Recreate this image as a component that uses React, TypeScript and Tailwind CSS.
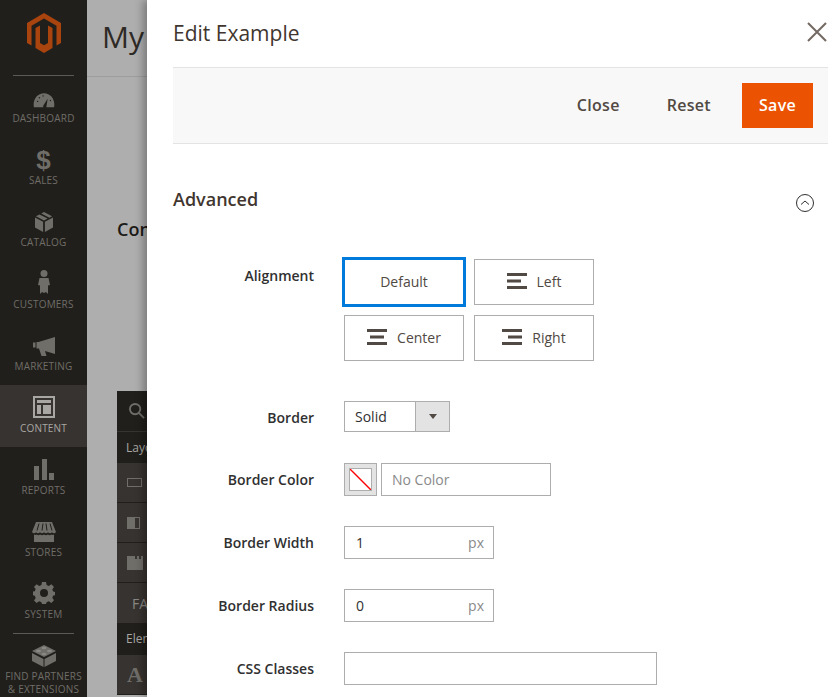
import React from "react";

const icons: Record<string, React.ReactNode> = {
  dashboard: (
    <svg width="22" height="16" viewBox="0 0 24 17">
      <path d="M1 16.500C-.5 8 4.500 1 12 1s12.500 7 11 15.500H14.500L16 7l-4 6.500c-1 1-1 2-.8 3H1z" fill="#706e69" />
      <circle cx="5" cy="10" r=".8" fill="#211f1b" />
      <circle cx="7" cy="6" r=".8" fill="#211f1b" />
      <circle cx="11" cy="4" r=".8" fill="#211f1b" />
      <circle cx="19" cy="9" r=".8" fill="#211f1b" />
    </svg>
  ),
  sales: <span className="font-['Liberation_Sans'] font-bold text-[26px] leading-[24px] mb-[-2px] text-[#706e69]">$</span>,
  catalog: (
    <svg width="18" height="20" viewBox="0 0 20 22">
      <path d="M10 0l9 4.500-3 1.700-9-4.600zM5 2.600l9 4.600L10 9.300 1 4.500z" fill="#706e69" />
      <path d="M0 6l9 4.800V22l-9-4.800zM20 6v11.200L11 22V10.800z" fill="#706e69" />
    </svg>
  ),
  customers: (
    <svg width="12" height="24" viewBox="0 0 12 24">
      <circle cx="6" cy="3.500" r="3.500" fill="#706e69" />
      <path d="M1.500 8h9L12 15l-2 .5V24l-2-2-2 1-2-1-2 2v-8.500L0 15z" fill="#706e69" />
    </svg>
  ),
  marketing: (
    <svg width="22" height="19" viewBox="0 0 22 19">
      <path d="M0 5.500h2.500v5H0zM3.500 5h2L22 0v17l-10-3 1.500 5H8.500L6 11.500H3.500z" fill="#706e69" />
    </svg>
  ),
  content: (
    <svg width="22" height="22" viewBox="0 0 22 22">
      <path fillRule="evenodd" d="M0 0h22v22H0zM2 2v18h18V2z" fill="#a9a7a3" />
      <path d="M4 4h14v3H4zM4 9h4v9H4zM10 9h8v9h-8z" fill="#a9a7a3" />
    </svg>
  ),
  reports: (
    <svg width="20" height="21" viewBox="0 0 20 21">
      <path d="M0 7h5v14H0zM8 0h5v21H8zM15 14h5v7h-5z" fill="#706e69" />
    </svg>
  ),
  stores: (
    <svg width="24" height="20" viewBox="0 0 24 20">
      <path d="M4 0h16l4 10c-1 1.500-3 1.500-4 .3-1 1.300-3 1.300-4 0-1 1.300-3 1.300-4 0-1 1.300-3 1.300-4 0-1 1.300-3 1.300-4 0-1 1.200-3 1.200-4-.3z" fill="#706e69" />
      <path d="M2 12.500c1 .6 2 .5 2.500 0 1.500 1 2.500 1 3.500 0 1.500 1 2.500 1 4 0 1.500 1 2.500 1 4 0 1 1 2 1 3.500 0 .5.500 1.500.6 2.500 0V20H2z" fill="#706e69" />
      <path d="M7 1.500L5 8.500M11 1.500L10 8.500M14 1.500L15 8.500M18 1.500L20 8.500" stroke="#211f1b" strokeWidth="1" />
    </svg>
  ),
  system: (
    <svg width="22" height="22" viewBox="0 0 22 22">
      <path
        fillRule="evenodd"
        fill="#706e69"
        d="M9 0h4l.6 3 2.200.9L18.400 2.300 21 5l-1.700 2.400.9 2.200 1.800.4v3.200l-1.800.4-.9 2.200 1.700 2.500-2.600 2.700-2.600-1.700-2.200.9-.6 1.800H9l-.6-1.800-2.200-.9L3.600 21 1 18.500l1.700-2.500-.9-2.200L0 13.200V9.600l1.800-.4.900-2.200L1 5l2.600-2.700 2.600 1.600 2.200-.9zM11 7a4 4 0 100 8 4 4 0 000-8z"
      />
    </svg>
  ),
  partners: (
    <svg width="24" height="22" viewBox="0 0 24 22">
      <path d="M12 0l12 6-12 6L0 6z" fill="#706e69" />
      <path d="M0 8l11.500 6v8L0 16zM24 8v8l-11.500 6v-8z" fill="#706e69" />
      <ellipse cx="12" cy="3" rx="2.500" ry="1.200" fill="#8a8884" />
      <ellipse cx="6.500" cy="6" rx="2.500" ry="1.200" fill="#8a8884" />
      <ellipse cx="17.500" cy="6" rx="2.500" ry="1.200" fill="#8a8884" />
      <ellipse cx="12" cy="9" rx="2.500" ry="1.200" fill="#8a8884" />
    </svg>
  ),
};

const menu = [
  { key: "dashboard", label: "Dashboard" },
  { key: "sales", label: "Sales" },
  { key: "catalog", label: "Catalog" },
  { key: "customers", label: "Customers" },
  { key: "marketing", label: "Marketing" },
  { key: "content", label: "Content", active: true },
  { key: "reports", label: "Reports" },
  { key: "stores", label: "Stores" },
  { key: "system", label: "System" },
];

function Sidebar() {
  return (
    <aside className="w-[87px] shrink-0 bg-[#211f1b] flex flex-col items-stretch">
      <div className="h-[75px] flex justify-center pt-[13px]">
        <svg width="36" height="40" viewBox="0 0 36 40">
          <path d="M18 0l17 10v20l-4.500 2.600V12.700L18 5.500 5.500 12.700v19.900L1 30V10z" fill="#a9440f" />
          <path d="M9.500 15L14 12.500V30l4 2.300 4-2.300V12.500l4.500 2.500v20L18 40l-8.500-5z" fill="#a9440f" />
        </svg>
      </div>
      <div className="h-px mx-[13px] bg-[#5c5a56]" />
      {menu.map((m) => (
        <div
          key={m.key}
          className={`h-[62px] flex flex-col items-center justify-end pb-[13px] gap-[4px] ${m.active ? "bg-[#373330]" : ""} ${m.key === "dashboard" ? "-mt-px" : ""}`}
        >
          <div className="h-[26px] flex items-end justify-center">{icons[m.key]}</div>
          <span className={`uppercase text-[10px] leading-[12px] tracking-[0.2px] ${m.active ? "text-[#a9a7a3]" : "text-[#6f6d68]"}`}>
            {m.label}
          </span>
        </div>
      ))}
      <div className="h-px mx-[13px] bg-[#5c5a56]" />
      <div className="flex flex-col items-center pt-[11px]">
        {icons.partners}
        <span className="uppercase text-[10px] leading-[13px] tracking-[0.2px] text-[#6f6d68] text-center whitespace-nowrap mt-[3px]">
          Find Partners
          <br />& Extensions
        </span>
      </div>
    </aside>
  );
}

function Backdrop() {
  const rowCls = "h-[40px] bg-[#373330] border-b border-[#211f1b] flex items-center pl-[10px] text-[#706e69]";
  return (
    <div className="w-[60px] shrink-0 bg-[#aeaeae] flex flex-col overflow-hidden">
      <div className="h-[77px] border-b border-[#9d9d9d] pl-[15px] pt-[17px] text-[30px] leading-[40px] text-[#2e2a26]">My</div>
      <div className="pl-[30px] pt-[140px] h-[314px] text-[18px] leading-[24px] font-[550] text-[#1c1a17] whitespace-nowrap">Content</div>
      <div className="ml-[30px] w-[100px] flex flex-col">
        <div className="h-[41px] bg-[#211f1b] border-b border-[#373330] flex items-center pl-[12px]">
          <svg width="16" height="16" viewBox="0 0 17 17" fill="none" stroke="#706e69" strokeWidth="2">
            <circle cx="6.500" cy="6.500" r="5.500" />
            <path d="M10.500 10.500L16 16" />
          </svg>
        </div>
        <div className="h-[31px] bg-[#211f1b] pl-[9px] flex items-center text-[12px] text-[#a9a7a3]">Layout</div>
        <div className={rowCls}>
          <div className="w-[15px] h-[9px] border border-[#706e69]" />
        </div>
        <div className={rowCls}>
          <div className="w-[7px] h-[12px] bg-[#706e69]" />
          <div className="w-[6px] h-[12px] border border-[#706e69]" />
        </div>
        <div className={rowCls}>
          <svg width="16" height="14" viewBox="0 0 16 14">
            <path d="M0 0h8v3h2V0h2v3h2V0h2v14H0z" fill="#706e69" />
          </svg>
        </div>
        <div className="h-[40px] bg-[#373330] pl-[15px] flex items-center text-[14px] font-medium text-[#8a8884]">FA</div>
        <div className="h-[32px] bg-[#211f1b] pl-[9px] flex items-center text-[12px] text-[#a9a7a3]">Elements</div>
        <div className={rowCls}>
          <span className="font-['Liberation_Serif'] font-bold text-[22px] text-[#706e69]">A</span>
        </div>
      </div>
    </div>
  );
}

function AlignIcon({ kind }: { kind: "left" | "center" | "right" }) {
  const midX = kind === "left" ? 0 : kind === "center" ? 3 : 6;
  return (
    <svg width="20" height="16" viewBox="0 0 20 16" className="shrink-0">
      <rect x="0" y="0" width="20" height="3" fill="#514943" />
      <rect x={midX} y="6.500" width="14" height="3" fill="#514943" />
      <rect x="0" y="13" width="20" height="3" fill="#514943" />
    </svg>
  );
}

function AlignButton({ label, kind, active }: { label: string; kind?: "left" | "center" | "right"; active?: boolean }) {
  return (
    <button
      className={`w-[120px] h-[46px] bg-white border pb-[2px] flex items-center justify-center gap-[10px] text-[14px] text-[#514943] ${
        active ? "border-[#007bdb] outline-2 outline-[#007bdb]" : "border-[#adadad]"
      }`}
    >
      {kind && <AlignIcon kind={kind} />}
      {label}
    </button>
  );
}

function Row({ label, top, children }: { label: string; top: string; children: React.ReactNode }) {
  return (
    <div className={`flex gap-[30px] ${top}`}>
      <label className="w-[141px] text-right text-[14px] leading-[33px] font-[550] text-[#303030] whitespace-nowrap">{label}</label>
      {children}
    </div>
  );
}

function PxInput({ value }: { value: string }) {
  return (
    <div className="w-[150px] h-[33px] border border-[#adadad] flex items-center justify-between pl-[11px] pr-[9px] text-[14px] text-[#303030]">
      <span>{value}</span>
      <span className="text-[#8a8a8a]">px</span>
    </div>
  );
}

function Panel() {
  return (
    <section className="relative flex-1 bg-white shadow-[-4px_0_8px_rgba(0,0,0,0.3)] pl-[26px] pr-[10px] overflow-hidden">
      <div className="h-[67px] flex items-start justify-between pt-[18px]">
        <h1 className="text-[21px] leading-[30px] text-[#41362f]">Edit Example</h1>
        <svg width="20" height="20" viewBox="0 0 20 20" className="absolute right-[11px] top-[22px]" stroke="#736963" strokeWidth="2">
          <path d="M1 1l18 18M19 1L1 19" />
        </svg>
      </div>
      <div className="h-[77px] bg-[#f8f8f8] border-y border-[#e3e3e3] flex items-center justify-end pr-[15px] text-[16px] font-semibold text-[#514943] tracking-[0.3px]">
        <button className="mr-[47px] pb-[2px]">Close</button>
        <button className="mr-[31px] pb-[2px]">Reset</button>
        <button className="w-[71px] h-[45px] bg-[#eb5202] text-white pb-[2px]">Save</button>
      </div>
      <div className="h-[115px] flex items-start justify-between pt-[42px] pr-[14px]">
        <h2 className="text-[18px] leading-[26px] font-[550] text-[#41362f]">Advanced</h2>
        <svg width="18" height="18" viewBox="0 0 18 18" fill="none" stroke="#303030" className="mt-[8px]">
          <circle cx="9" cy="9" r="8.500" />
          <path d="M5 10.500L9 7l4 3.500" />
        </svg>
      </div>
      <div className="flex flex-col">
        <div className="flex gap-[30px]">
          <label className="w-[141px] text-right text-[14px] leading-[34px] font-[550] text-[#303030]">Alignment</label>
          <div className="grid grid-cols-[120px_120px] gap-[10px]">
            <AlignButton label="Default" active />
            <AlignButton label="Left" kind="left" />
            <AlignButton label="Center" kind="center" />
            <AlignButton label="Right" kind="right" />
          </div>
        </div>
        <Row label="Border" top="mt-[40px]">
          <div className="w-[106px] h-[31px] border border-[#adadad] flex text-[14px] text-[#303030]">
            <span className="flex-1 pl-[10px] leading-[29px]">Solid</span>
            <span className="w-[34px] bg-[#e3e3e3] border-l border-[#adadad] flex items-center justify-center">
              <span className="w-0 h-0 border-x-[4px] border-x-transparent border-t-[5px] border-t-[#514943]" />
            </span>
          </div>
        </Row>
        <Row label="Border Color" top="mt-[29px]">
          <div className="flex gap-[4px]">
            <div className="w-[33px] h-[33px] bg-[#e3e3e3] border border-[#adadad] p-[4px]">
              <svg width="23" height="23" viewBox="0 0 23 23" className="bg-white border border-[#adadad]">
                <path d="M0 0L23 23" stroke="#ff0000" strokeWidth="1.500" />
              </svg>
            </div>
            <div className="w-[170px] h-[33px] border border-[#adadad] pl-[10px] text-[14px] leading-[31px] text-[#8a8a8a]">No Color</div>
          </div>
        </Row>
        <Row label="Border Width" top="mt-[30px]">
          <PxInput value="1" />
        </Row>
        <Row label="Border Radius" top="mt-[30px]">
          <PxInput value="0" />
        </Row>
        <Row label="CSS Classes" top="mt-[30px]">
          <div className="w-[313px] h-[33px] border border-[#adadad]" />
        </Row>
      </div>
    </section>
  );
}

export default function App() {
  return (
    <div className="w-[838px] h-[697px] overflow-hidden flex font-['Open_Sans',sans-serif]">
      <Sidebar />
      <Backdrop />
      <Panel />
    </div>
  );
}
